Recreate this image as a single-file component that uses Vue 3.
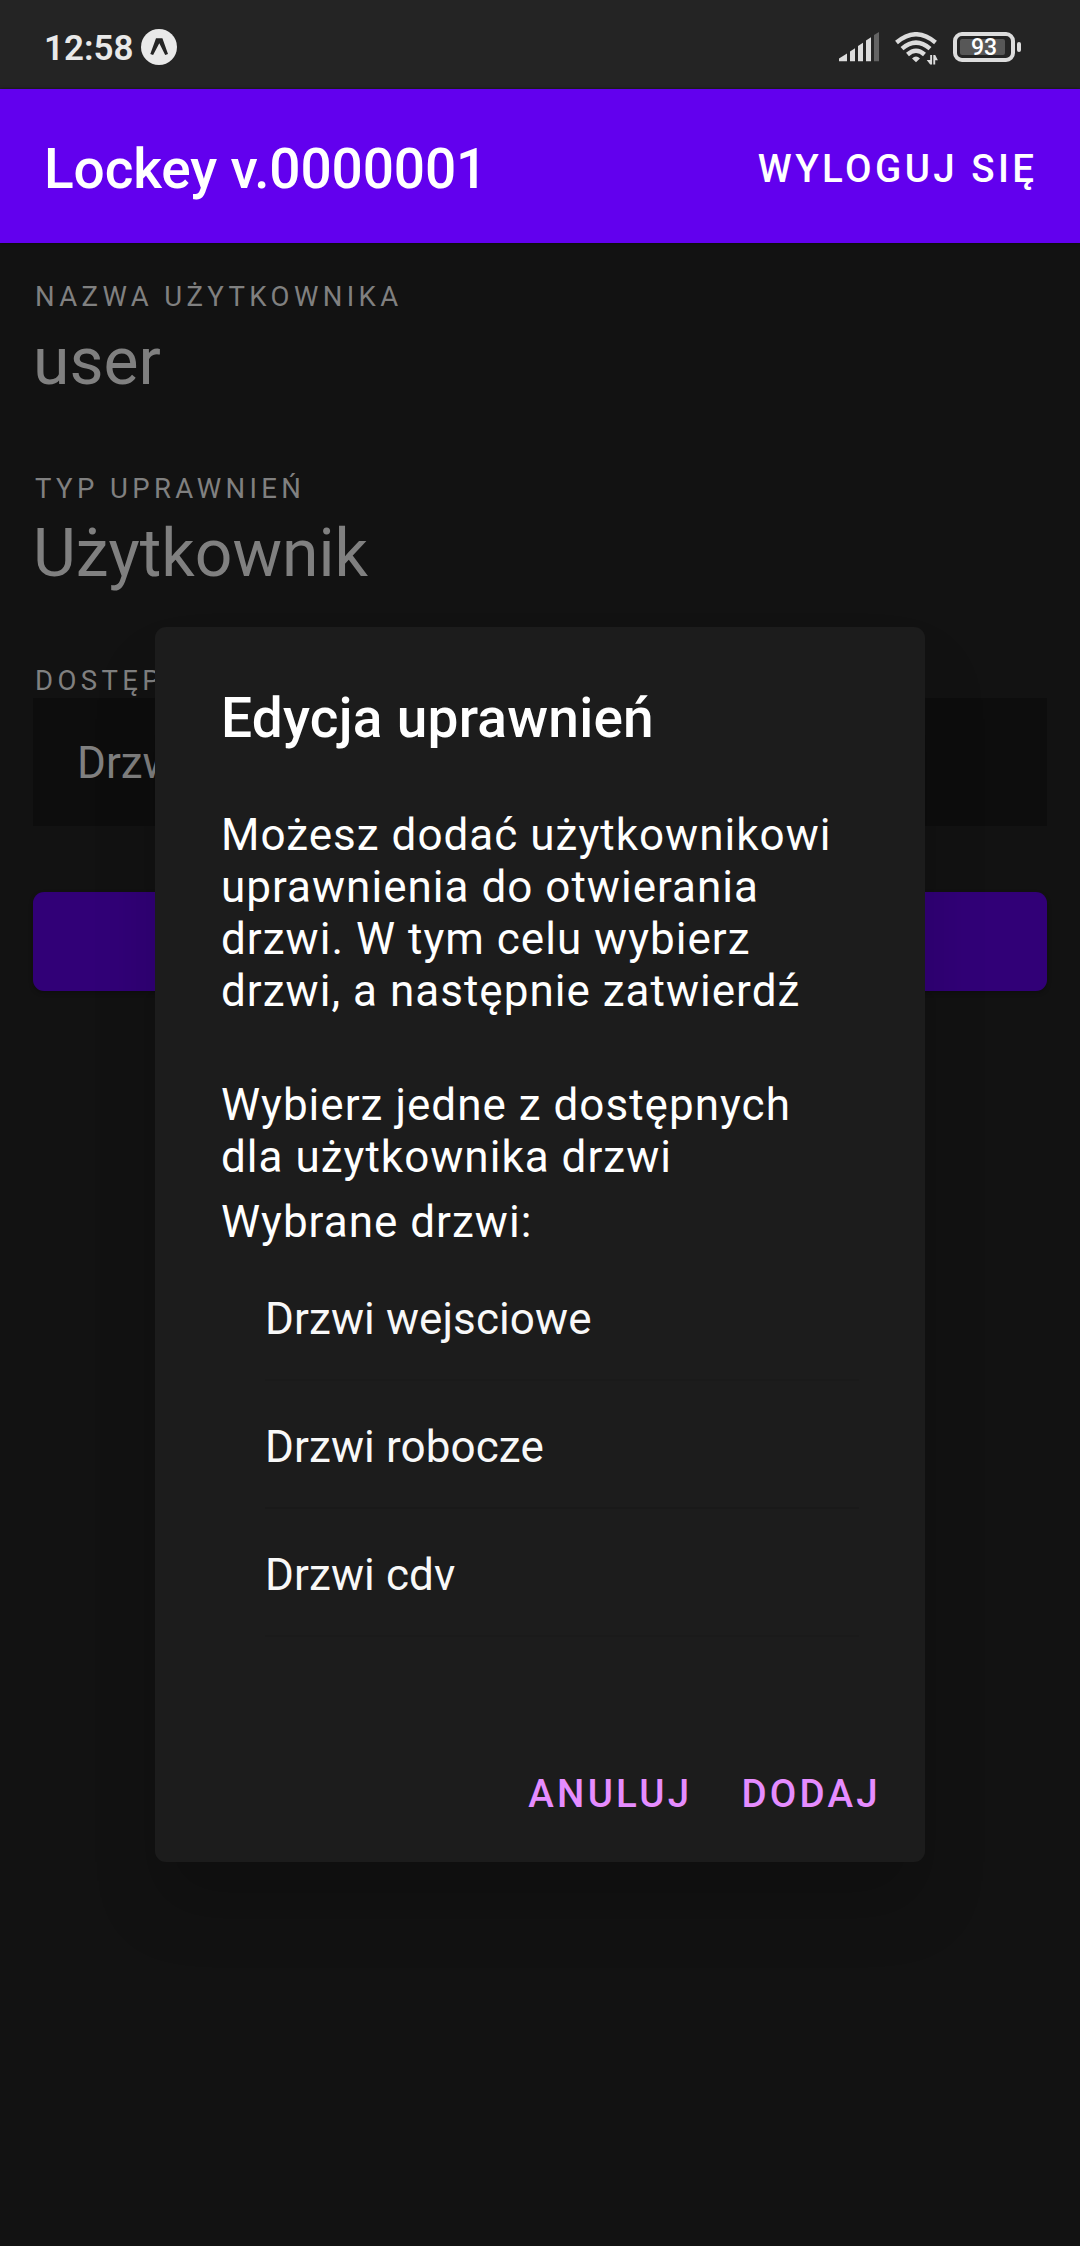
<script setup>
const fields = [
  { label: 'Nazwa użytkownika', value: 'user' },
  { label: 'Typ uprawnień', value: 'Użytkownik' },
]
const doors = ['Drzwi wejsciowe', 'Drzwi robocze', 'Drzwi cdv']
</script>

<template>
  <div class="screen">
    <div class="status">
      <div class="status-left">
        <span class="clock">12:58</span>
        <svg class="badge" width="36" height="36" viewBox="0 0 36 36">
          <circle cx="18" cy="18" r="18" fill="#e9e9e9" />
          <path d="M9.300 25L15 9.200H21.400L27 25L24.200 26L18.300 14.300L12.100 26Z" fill="#242424" />
        </svg>
      </div>
      <div class="status-right">
        <svg width="40" height="30" viewBox="0 0 40 30" fill="#dcdcdc">
          <path d="M0 29.200V26.500L8 21.500V29.200Z" />
          <path d="M11 29.200V19.500L16 16.200V29.200Z" />
          <path d="M19 29.200V14L24 10.800V29.200Z" />
          <path d="M27 29.200V8.500L32 5.200V29.200Z" />
          <path d="M35 29.200V3L40 0V29.200Z" fill="#636363" />
        </svg>
        <svg class="wifi" width="43" height="34" viewBox="0 0 43 34">
          <g fill="none" stroke="#dcdcdc" stroke-width="4.400">
            <path d="M1.500 10.500Q21 -6 40.500 10.500" />
            <path d="M7 16.700Q21 4.500 35 16.700" />
            <path d="M12.500 22.500Q21 15 29.500 22.500" />
          </g>
          <path d="M17 26.500Q21 22.500 25 26.500L21 30.300Z" fill="#dcdcdc" />
          <path d="M35.200 23H37.100V32.500H35.200L31.700 28H35.200Z" fill="#dcdcdc" />
          <path d="M38.300 32.500V23H40.200L42.900 28.300H40.200V32.500Z" fill="#dcdcdc" />
        </svg>
        <div class="battery">
          <div class="cell"><div class="charge">93</div></div>
          <div class="nub"></div>
        </div>
      </div>
    </div>

    <header class="bar">
      <h1>Lockey v.0000001</h1>
      <button class="logout">Wyloguj się</button>
    </header>

    <main>
      <section v-for="f in fields" :key="f.label" class="field">
        <div class="label">{{ f.label }}</div>
        <div class="value">{{ f.value }}</div>
      </section>
      <div class="label">Dostęp</div>
      <div class="door-card">Drzwi</div>
      <div class="edit"></div>
    </main>

    <div class="overlay">
      <div class="dialog">
        <h2>Edycja uprawnień</h2>
        <p>Możesz dodać użytkownikowi uprawnienia do otwierania drzwi. W tym celu wybierz drzwi, a następnie zatwierdź</p>
        <p class="second">Wybierz jedne z dostępnych dla użytkownika drzwi</p>
        <p class="third">Wybrane drzwi:</p>
        <ul>
          <li v-for="d in doors" :key="d">{{ d }}</li>
        </ul>
        <div class="actions">
          <button>Anuluj</button>
          <button>Dodaj</button>
        </div>
      </div>
    </div>
  </div>
</template>

<style>
body {
  background: #121212;
}
</style>

<style scoped>
.screen {
  position: relative;
  width: 1080px;
  height: 2246px;
  overflow: hidden;
  background: #121212;
  color: #fff;
  font-family: Roboto, 'Liberation Sans', sans-serif;
}
h1, h2, p, ul { margin: 0; padding: 0; font-weight: 400; }
button {
  border: 0;
  padding: 0;
  background: none;
  font: 500 38.5px/48px Roboto, 'Liberation Sans', sans-serif;
  letter-spacing: 3.44px;
  text-transform: uppercase;
  color: inherit;
  white-space: nowrap;
}
.status {
  display: flex;
  justify-content: space-between;
  height: 89px;
  background: #242424;
}
.status-left {
  display: flex;
  align-items: flex-start;
  padding: 28px 0 0 44px;
}
.clock {
  width: 97px;
  font-size: 35px;
  line-height: 41px;
  font-weight: 600;
  color: #e9e9e9;
}
.badge { margin-top: 1px; }
.status-right {
  display: flex;
  align-items: flex-start;
  padding: 32px 59px 0 0;
}
.wifi { margin-left: 16px; }
.battery {
  display: flex;
  align-items: center;
  gap: 2px;
  margin-left: 15px;
}
.cell {
  box-sizing: border-box;
  width: 62px;
  height: 30px;
  padding: 3px;
  border: 4px solid #dcdcdc;
  border-radius: 9px;
}
.charge {
  width: 45px;
  height: 16px;
  border-radius: 2px;
  background: #575757;
  font-size: 23px;
  line-height: 18px;
  font-weight: 500;
  text-align: center;
  text-indent: 3px;
}
.nub {
  width: 4px;
  height: 10px;
  border-radius: 2px;
  background: #dcdcdc;
}
.bar {
  display: flex;
  align-items: center;
  justify-content: space-between;
  height: 154px;
  box-sizing: border-box;
  padding: 5px 44px 0;
  background: #6200ee;
  box-shadow: 0 0 3px rgba(0, 0, 0, 0.5);
}
h1 {
  font-size: 55px;
  line-height: 64px;
  font-weight: 500;
  letter-spacing: -0.14px;
}
.logout { margin-right: -1.5px; }
main { padding: 38px 33px 0; color: #808080; }
.field { height: 192px; }
.label {
  height: 32px;
  padding-left: 2px;
  font-size: 27.5px;
  line-height: 32px;
  letter-spacing: 4.4px;
  text-transform: uppercase;
}
.value {
  margin-top: 10px;
  font-size: 66px;
  line-height: 78px;
}
.door-card {
  box-sizing: border-box;
  height: 128px;
  margin-top: 1px;
  padding: 39px 0 0 44px;
  background: #0d0d0d;
  font-size: 44px;
  line-height: 52px;
}
.edit {
  height: 99px;
  margin-top: 66px;
  border-radius: 11px;
  background: #310077;
  box-shadow: 0 2px 4px rgba(0, 0, 0, 0.25);
}
.overlay {
  position: absolute;
  inset: 0;
  display: flex;
  align-items: flex-start;
  justify-content: center;
  padding-top: 627px;
}
.dialog {
  box-sizing: border-box;
  width: 770px;
  height: 1235px;
  padding: 59px 66px 0;
  border-radius: 11px;
  background: #1c1c1c;
  box-shadow: 0 46px 66px -4px rgba(0, 0, 0, 0.18);
}
h2 {
  font-size: 55px;
  line-height: 64px;
  font-weight: 500;
  letter-spacing: 0.24px;
}
p {
  margin-top: 59px;
  font-size: 44px;
  line-height: 52px;
  letter-spacing: 1.02px;
}
.second { margin-top: 62px; }
.third { margin-top: 13px; }
ul {
  list-style: none;
  margin: 5px 0 0 44px;
}
li {
  box-sizing: border-box;
  height: 128px;
  padding-top: 40px;
  border-bottom: 2px solid #1a1a1a;
  font-size: 44px;
  line-height: 52px;
  letter-spacing: 0.1px;
  color: #f8f8f8;
}
li:nth-child(2) { border-bottom-color: #191919; }
.actions {
  display: flex;
  justify-content: flex-end;
  gap: 49px;
  margin: 133px -22px 0 0;
  color: #e58cff;
}
.actions button { letter-spacing: 3.25px; }
</style>
